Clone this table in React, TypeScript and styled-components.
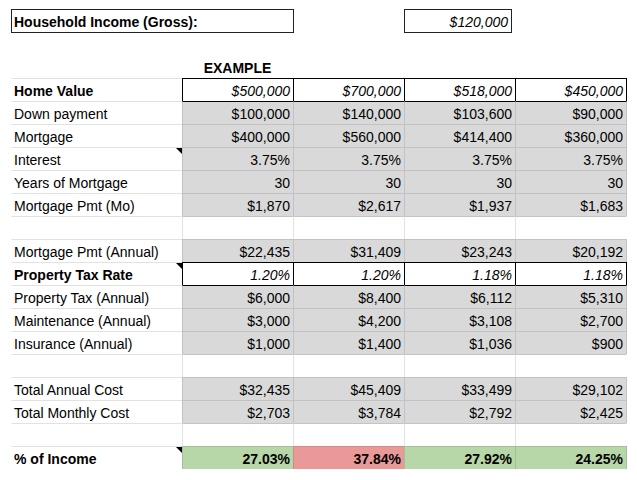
import React from "react";
import styled, { createGlobalStyle, css } from "styled-components";

const GlobalStyle = createGlobalStyle`
  html, body { margin: 0; padding: 0; background: #ffffff; }
  body { font-family: "Liberation Sans", Arial, sans-serif; font-size: 14px; color: #000; }
`;

const LINE = "#e2e2e2";
const GRAY_LINE = "#c4c4c4";
const SHADE = "rgba(0,0,0,0.1)";
const BLACK = "#000000";

const GRAY = "#d9d9d9";
const GREEN = "#b7d7a8";
const RED = "#ea9999";

type Kind = "example" | "input" | "calc" | "blank" | "result";

interface RowData {
  label: string;
  kind: Kind;
  bold?: boolean;
  note?: boolean;
  values?: string[];
  fills?: string[];
}

const rows: RowData[] = [
  { label: "", kind: "example", values: ["EXAMPLE", "", "", ""] },
  { label: "Home Value", kind: "input", bold: true, values: ["$500,000", "$700,000", "$518,000", "$450,000"] },
  { label: "Down payment", kind: "calc", values: ["$100,000", "$140,000", "$103,600", "$90,000"] },
  { label: "Mortgage", kind: "calc", values: ["$400,000", "$560,000", "$414,400", "$360,000"] },
  { label: "Interest", kind: "calc", note: true, values: ["3.75%", "3.75%", "3.75%", "3.75%"] },
  { label: "Years of Mortgage", kind: "calc", values: ["30", "30", "30", "30"] },
  { label: "Mortgage Pmt (Mo)", kind: "calc", values: ["$1,870", "$2,617", "$1,937", "$1,683"] },
  { label: "", kind: "blank" },
  { label: "Mortgage Pmt (Annual)", kind: "calc", values: ["$22,435", "$31,409", "$23,243", "$20,192"] },
  { label: "Property Tax Rate", kind: "input", bold: true, note: true, values: ["1.20%", "1.20%", "1.18%", "1.18%"] },
  { label: "Property Tax (Annual)", kind: "calc", values: ["$6,000", "$8,400", "$6,112", "$5,310"] },
  { label: "Maintenance (Annual)", kind: "calc", values: ["$3,000", "$4,200", "$3,108", "$2,700"] },
  { label: "Insurance (Annual)", kind: "calc", values: ["$1,000", "$1,400", "$1,036", "$900"] },
  { label: "", kind: "blank" },
  { label: "Total Annual Cost", kind: "calc", values: ["$32,435", "$45,409", "$33,499", "$29,102"] },
  { label: "Total Monthly Cost", kind: "calc", values: ["$2,703", "$3,784", "$2,792", "$2,425"] },
  { label: "", kind: "blank" },
  {
    label: "% of Income",
    kind: "result",
    bold: true,
    note: true,
    values: ["27.03%", "37.84%", "27.92%", "24.25%"],
    fills: [GREEN, RED, GREEN, GREEN],
  },
];

const Page = styled.div`
  padding: 9px 0 0 11px;
`;

const Sheet = styled.div`
  display: grid;
  grid-template-columns: 171px 111px 111px 111px 112px;
  grid-auto-rows: 23px;
  width: 616px;
`;

const HeaderBox = styled.div<{ $span: number; $width: number; $align: "left" | "right"; $bold?: boolean; $italic?: boolean }>`
  grid-column: span ${(p) => p.$span};
  box-sizing: border-box;
  width: ${(p) => p.$width}px;
  height: 24px;
  border: 1px solid #222;
  display: flex;
  align-items: center;
  justify-content: ${(p) => (p.$align === "left" ? "flex-start" : "flex-end")};
  padding: 1px 3px 0 2px;
  font-weight: ${(p) => (p.$bold ? 700 : 400)};
  font-style: ${(p) => (p.$italic ? "italic" : "normal")};
  white-space: nowrap;
`;

const Spacer = styled.div<{ $span: number }>`
  grid-column: span ${(p) => p.$span};
`;

interface CellProps {
  $top: string;
  $left: string;
  $right?: string;
  $bottom?: string;
  $bg: string;
  $bold?: boolean;
  $italic?: boolean;
  $align: "left" | "right" | "center";
  $note?: boolean;
}

const Cell = styled.div<CellProps>`
  position: relative;
  box-sizing: border-box;
  height: ${(p) => (p.$bottom ? 24 : 23)}px;
  border-top: 1px solid ${(p) => p.$top};
  border-left: 1px solid ${(p) => p.$left};
  ${(p) => p.$right && css`border-right: 1px solid ${p.$right};`}
  ${(p) => p.$bottom && css`border-bottom: 1px solid ${p.$bottom};`}
  background: ${(p) => p.$bg};
  display: flex;
  align-items: center;
  justify-content: ${(p) =>
    p.$align === "left" ? "flex-start" : p.$align === "center" ? "center" : "flex-end"};
  padding: 1px 3px 0 2px;
  font-weight: ${(p) => (p.$bold ? 700 : 400)};
  font-style: ${(p) => (p.$italic ? "italic" : "normal")};
  white-space: nowrap;
  overflow: visible;
  ${(p) =>
    p.$note &&
    css`
      &::after {
        content: "";
        position: absolute;
        top: 0;
        right: 0;
        width: 0;
        height: 0;
        border-left: 6px solid transparent;
        border-top: 6px solid #000;
      }
    `}
`;

function valueBorders(row: RowData, prev: RowData | undefined, col: number, last: boolean) {
  const k = row.kind;
  const pk = prev?.kind;
  let top = "transparent";
  if (k === "input" || pk === "input") top = BLACK;
  else if (k === "calc" || k === "result") top = SHADE;
  else if (k === "blank" && (pk === "calc" || pk === "result")) top = GRAY_LINE;
  else if (k === "blank") top = LINE;

  let left = "transparent";
  if (k === "input") left = BLACK;
  else if (k === "calc" || k === "result") left = SHADE;
  else if (k === "blank") left = LINE;

  let right: string | undefined;
  if (col === 3) {
    if (k === "input") right = BLACK;
    else if (k === "calc" || k === "result") right = SHADE;
    else right = "transparent";
  }
  const bottom = last ? SHADE : undefined;
  return { top, left, right, bottom };
}

function fillFor(row: RowData, col: number) {
  if (row.fills) return row.fills[col];
  if (row.kind === "calc") return GRAY;
  return "#ffffff";
}

export default function App() {
  return (
    <Page>
      <GlobalStyle />
      <Sheet>
        <HeaderBox $span={2} $width={283} $align="left" $bold>
          Household Income (Gross):
        </HeaderBox>
        <Spacer $span={1} />
        <HeaderBox $span={1} $width={108} $align="right" $italic>
          $120,000
        </HeaderBox>
        <Spacer $span={1} />
        <Spacer $span={5} />
        {rows.map((row, r) => {
          const prev = rows[r - 1];
          const last = r === rows.length - 1;
          const labelTop = row.kind === "example" ? "transparent" : LINE;
          return (
            <React.Fragment key={r}>
              <Cell
                $top={labelTop}
                $left="transparent"
                $bottom={last ? LINE : undefined}
                $bg="#ffffff"
                $bold={row.bold}
                $align="left"
                $note={row.note}
              >
                {row.label}
              </Cell>
              {[0, 1, 2, 3].map((c) => {
                const b = valueBorders(row, prev, c, last);
                const isExample = row.kind === "example";
                return (
                  <Cell
                    key={c}
                    $top={b.top}
                    $left={b.left}
                    $right={b.right}
                    $bottom={b.bottom}
                    $bg={fillFor(row, c)}
                    $bold={isExample || row.kind === "result"}
                    $italic={row.kind === "input"}
                    $align={isExample ? "center" : "right"}
                  >
                    {row.values ? row.values[c] : ""}
                  </Cell>
                );
              })}
            </React.Fragment>
          );
        })}
      </Sheet>
    </Page>
  );
}
